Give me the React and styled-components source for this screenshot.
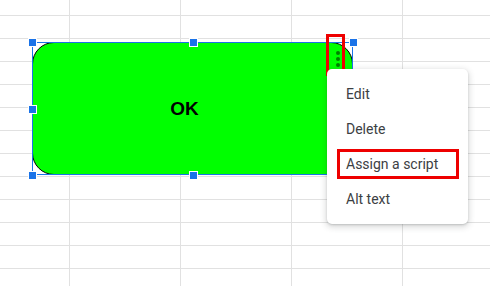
import { createGlobalStyle, styled } from "styled-components"

const GlobalStyle = createGlobalStyle`
html, body {
    margin: 0;
    padding: 0;
    background: #fff;
}
#root {
    width: 490px;
    height: 286px;
}
`

const handles = [
    [0, 0], [50, 0], [100, 0],
    [0, 50], [100, 50],
    [0, 100], [50, 100], [100, 100],
]

const items = ["Edit", "Delete", "Assign a script", "Alt text"]

const App = () => {

    return (
        <>
        <GlobalStyle />
        <Sheet>
            <Selection>
                <Shape>
                    <Label>OK</Label>
                </Shape>
                {handles.map(([x, y]) => (
                    <Handle key={x + "-" + y} style={{ left: x + "%", top: y + "%" }} />
                ))}
            </Selection>
            <Dots>
                <Dot />
                <Dot />
                <Dot />
            </Dots>
            <Marker />
            <Menu>
                {items.map((item) => (
                    <Item key={item} $marked={item === "Assign a script"}>{item}</Item>
                ))}
            </Menu>
        </Sheet>
        </>
    )
}

export default App

const Sheet = styled.div`
position: relative;
width: 490px;
height: 286px;
overflow: hidden;
background-color: #fff;
background-image:
    linear-gradient(to right, #e1e1e1 1px, transparent 1px),
    linear-gradient(to bottom, #e1e1e1 1px, transparent 1px);
background-size: 111px 23px;
background-position: 69px 15px;
`

const Selection = styled.div`
position: absolute;
left: 32px;
top: 42px;
width: 321px;
height: 133px;
background: #fff;
&::after {
    content: "";
    position: absolute;
    inset: 0;
    border: 1px solid #1a73e8;
    pointer-events: none;
}
`

const Shape = styled.div`
box-sizing: border-box;
width: 100%;
height: 100%;
display: flex;
justify-content: center;
align-items: center;
background: #00ff00;
border: 1px solid #000;
border-radius: 22px;
`

const Label = styled.span`
font-family: "Liberation Sans", Arial, sans-serif;
font-weight: bold;
font-size: 19px;
color: #000;
margin-right: 16px;
`

const Handle = styled.div`
position: absolute;
z-index: 1;
box-sizing: border-box;
width: 9px;
height: 9px;
margin: -4px 0 0 -4px;
background: #1a73e8;
border: 1px solid #fff;
`

const Dots = styled.div`
position: absolute;
left: 336px;
top: 51px;
display: flex;
flex-direction: column;
gap: 2px;
`

const Dot = styled.div`
width: 4px;
height: 4px;
border-radius: 50%;
background: rgba(0, 0, 0, 0.5);
`

const Marker = styled.div`
position: absolute;
z-index: 2;
left: 326px;
top: 34px;
width: 19px;
height: 42px;
box-sizing: border-box;
border: 3px solid #ee0000;
`

const Menu = styled.div`
position: absolute;
z-index: 2;
left: 327px;
top: 69px;
width: 141px;
box-sizing: border-box;
padding: 7px 0 8px;
background: #fff;
border-radius: 5px;
box-shadow: 0 2px 6px 1px rgba(60, 64, 67, 0.2), 0 1px 2px rgba(60, 64, 67, 0.2);
`

const Item = styled.div`
position: relative;
height: 35px;
display: flex;
align-items: center;
padding-left: 19px;
font-family: Roboto, "Liberation Sans", sans-serif;
font-size: 14px;
color: #3c4043;
&::after {
    content: "";
    display: ${(p) => (p.$marked ? "block" : "none")};
    position: absolute;
    left: 10px;
    right: 9px;
    top: 3px;
    bottom: 2px;
    border: 3px solid #ee0000;
}
`
